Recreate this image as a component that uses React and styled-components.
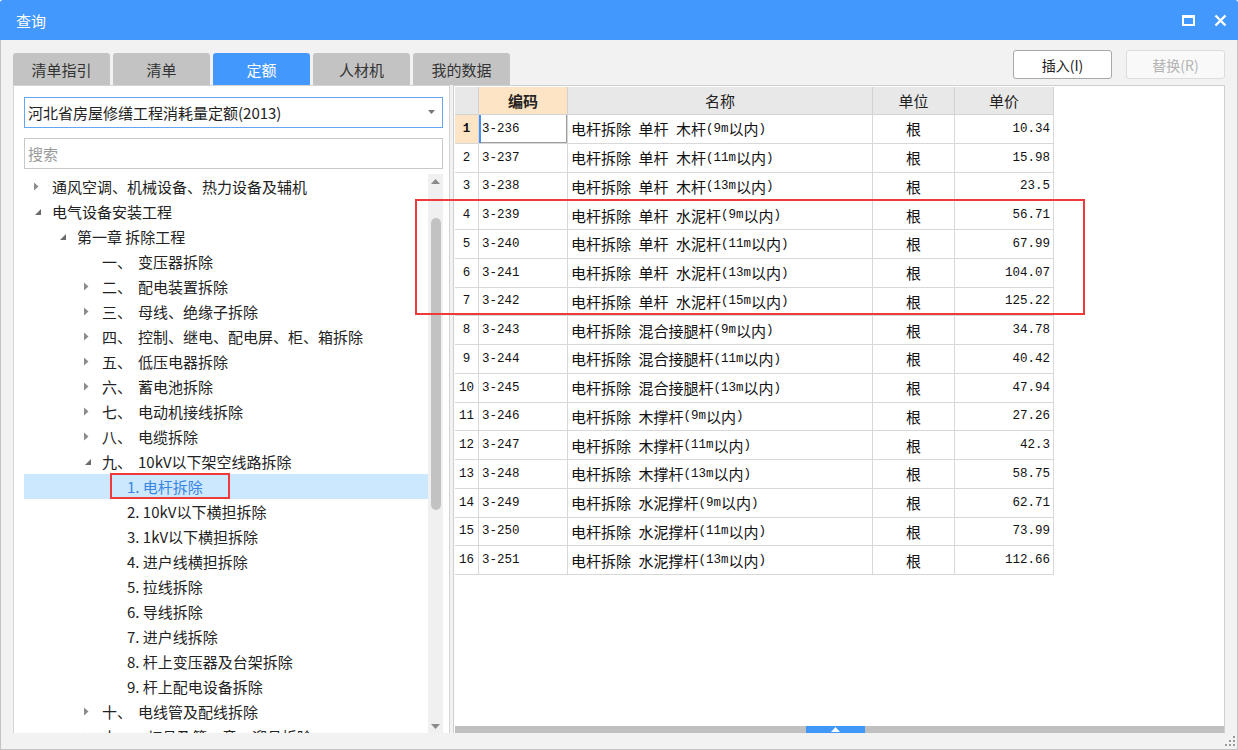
import React from "react";
import styled, { createGlobalStyle } from "styled-components";

const GlobalStyle = createGlobalStyle`
  html, body {
    margin: 0;
    padding: 0;
    background: #ffffff;
  }
  body {
    font-family: "Noto Sans CJK SC", "Noto Sans", sans-serif;
    color: #222;
  }
`;

const Window = styled.div`
  position: relative;
  width: 1238px;
  height: 750px;
  display: flex;
  flex-direction: column;
  overflow: hidden;
`;

const TitleBar = styled.div`
  height: 40px;
  flex: none;
  background: #4398fd;
  border-radius: 3px 3px 0 0;
  display: flex;
  align-items: center;
  justify-content: space-between;
  padding: 0 11px 0 16px;
  color: #fff;
  font-size: 15px;
`;

const WinButtons = styled.div`
  display: flex;
  align-items: center;
  gap: 19px;
`;

const Body = styled.div`
  flex: 1;
  display: flex;
  flex-direction: column;
  background: #f2f2f2;
  border: 1px solid #c4c4c4;
  border-top: none;
  padding: 0 12px;
  min-height: 0;
`;

const TopRow = styled.div`
  height: 45px;
  flex: none;
  display: flex;
  justify-content: space-between;
  align-items: flex-end;
`;

const Tabs = styled.div`
  display: flex;
  gap: 3px;
`;

const Tab = styled.div`
  width: 97px;
  height: 32px;
  border-radius: 3px 3px 0 0;
  display: flex;
  align-items: center;
  justify-content: center;
  font-size: 15px;
  background: ${(p) => (p.$active ? "#4398fd" : "#c3c3c3")};
  color: ${(p) => (p.$active ? "#fff" : "#333")};
`;

const Buttons = styled.div`
  align-self: flex-start;
  margin-top: 10px;
  display: flex;
  gap: 14px;
`;

const Button = styled.div`
  width: 99px;
  height: 29px;
  box-sizing: border-box;
  border: 1px solid ${(p) => (p.$disabled ? "#dddddd" : "#a8a8a8")};
  border-radius: 3px;
  background: ${(p) => (p.$disabled ? "#f9f9f9" : "#fff")};
  color: ${(p) => (p.$disabled ? "#b4b4b4" : "#222")};
  display: flex;
  align-items: center;
  justify-content: center;
  font-size: 14px;
`;

const Main = styled.div`
  height: 648px;
  flex: none;
  display: flex;
  gap: 3px;
`;

const LeftPanel = styled.div`
  width: 437px;
  box-sizing: border-box;
  background: #fff;
  border: 1px solid #d4d4d4;
  border-bottom: none;
  padding: 11px 6px 0 10px;
  display: flex;
  flex-direction: column;
`;

const Select = styled.div`
  height: 31px;
  flex: none;
  box-sizing: border-box;
  border: 1px solid #65a6f4;
  display: flex;
  align-items: center;
  justify-content: space-between;
  padding: 0 7px 1px 3px;
  font-size: 15px;
  color: #222;
`;

const Search = styled.div`
  height: 31px;
  flex: none;
  margin-top: 10px;
  box-sizing: border-box;
  border: 1px solid #c8c8c8;
  display: flex;
  align-items: center;
  padding: 0 0 1px 3px;
  font-size: 15px;
  color: #9a9a9a;
`;

const TreeArea = styled.div`
  margin-top: 5px;
  flex: 1;
  min-height: 0;
  display: flex;
`;

const TreeList = styled.div`
  flex: 1;
  overflow: hidden;
`;

const TreeRow = styled.div`
  position: relative;
  height: 25px;
  display: flex;
  align-items: center;
  padding-left: ${(p) => 8 + p.$level * 25}px;
  background: ${(p) => (p.$selected ? "#cce8ff" : "transparent")};
  color: ${(p) => (p.$selected ? "#3a85e2" : "#222")};
  font-size: 15px;
  white-space: nowrap;
`;

const Toggle = styled.span`
  width: 20px;
  flex: none;
  display: flex;
  align-items: center;
`;

const Num = styled.span`
  display: inline-block;
  min-width: 36px;
  flex: none;
`;

const Mark = styled.span`
  position: absolute;
  left: ${(p) => p.$left}px;
  top: ${(p) => p.$top}px;
  width: ${(p) => p.$width}px;
  height: ${(p) => p.$height}px;
  box-sizing: border-box;
  border: 2px solid #f0393b;
  pointer-events: none;
`;

const VScroll = styled.div`
  width: 15px;
  flex: none;
  background: #f0f0f0;
  display: flex;
  flex-direction: column;
  align-items: center;
`;

const ScrollArrow = styled.div`
  height: 14px;
  flex: none;
  display: flex;
  align-items: center;
  justify-content: center;
`;

const VThumb = styled.div`
  width: 10px;
  height: 292px;
  margin-top: 30px;
  border-radius: 5px;
  background: #c2c2c2;
`;

const Spacer = styled.div`
  flex: 1;
`;

const TablePanel = styled.div`
  flex: 1;
  box-sizing: border-box;
  background: #fff;
  border: 1px solid #cfcfcf;
  border-bottom: none;
  padding: 1px 0 0 1px;
  display: flex;
  flex-direction: column;
`;

const Grid = styled.div`
  display: grid;
  grid-template-columns: 24px 89px 305px 82px 99px;
  grid-template-rows: 28px repeat(16, 28.75px);
  width: 599px;
`;

const HeadCell = styled.div`
  box-sizing: border-box;
  border-right: 1px solid #d2d2d2;
  border-bottom: 1px solid #d2d2d2;
  background: ${(p) => (p.$hot ? "#fde4c4" : "#e8e8e8")};
  font-weight: ${(p) => (p.$hot ? 700 : 400)};
  display: flex;
  align-items: center;
  justify-content: center;
  font-size: 15px;
  color: #222;
`;

const Cell = styled.div`
  box-sizing: border-box;
  border-right: 1px solid #d8d8d8;
  border-bottom: 1px solid #d8d8d8;
  display: flex;
  align-items: center;
  justify-content: ${(p) => p.$align || "flex-start"};
  padding: 0 3px;
  font-size: 15px;
  color: #111;
  white-space: nowrap;
  overflow: hidden;
  background: ${(p) => (p.$hot ? "#fde4c4" : "#fff")};
  font-weight: ${(p) => (p.$hot ? 700 : 400)};
  box-shadow: ${(p) =>
    p.$focus ? "inset 2px 0 0 #4a8ff0, inset -1px -1px 0 #9c9c9c" : "none"};
`;

const Latin = styled.span`
  font-family: "Liberation Mono", "DejaVu Sans Mono", monospace;
  font-size: 12.5px;
  white-space: pre;
`;

const HScroll = styled.div`
  height: 7px;
  flex: none;
  background: #c0c0c0;
  display: flex;
`;

const HThumb = styled.div`
  margin-left: 351px;
  width: 59px;
  background: #3f97f8;
  display: flex;
  align-items: center;
  justify-content: center;
`;

const BottomBar = styled.div`
  flex: 1;
`;

const Grip = styled.svg`
  position: absolute;
  right: 3px;
  bottom: 4px;
`;

const Arrow = ({ open }) =>
  open ? (
    <svg width="8" height="8" viewBox="0 0 8 8" style={{ marginLeft: 2 }}>
      <polygon points="7,1 7,7 1,7" fill="#6b6b6b" />
    </svg>
  ) : (
    <svg width="6" height="9" viewBox="0 0 6 9" style={{ marginLeft: 1 }}>
      <polygon points="1,0.5 5.5,4.5 1,8.5" fill="#8c8c8c" />
    </svg>
  );

const tree = [
  { level: 0, state: "closed", text: "通风空调、机械设备、热力设备及辅机" },
  { level: 0, state: "open", text: "电气设备安装工程" },
  { level: 1, state: "open", text: "第一章 拆除工程" },
  { level: 2, num: "一、", text: "变压器拆除" },
  { level: 2, state: "closed", num: "二、", text: "配电装置拆除" },
  { level: 2, state: "closed", num: "三、", text: "母线、绝缘子拆除" },
  { level: 2, state: "closed", num: "四、", text: "控制、继电、配电屏、柜、箱拆除" },
  { level: 2, state: "closed", num: "五、", text: "低压电器拆除" },
  { level: 2, state: "closed", num: "六、", text: "蓄电池拆除" },
  { level: 2, state: "closed", num: "七、", text: "电动机接线拆除" },
  { level: 2, state: "closed", num: "八、", text: "电缆拆除" },
  { level: 2, state: "open", num: "九、", text: "10kV以下架空线路拆除" },
  { level: 3, text: "1. 电杆拆除", selected: true },
  { level: 3, text: "2. 10kV以下横担拆除" },
  { level: 3, text: "3. 1kV以下横担拆除" },
  { level: 3, text: "4. 进户线横担拆除" },
  { level: 3, text: "5. 拉线拆除" },
  { level: 3, text: "6. 导线拆除" },
  { level: 3, text: "7. 进户线拆除" },
  { level: 3, text: "8. 杆上变压器及台架拆除" },
  { level: 3, text: "9. 杆上配电设备拆除" },
  { level: 2, state: "closed", num: "十、", text: "电线管及配线拆除" },
  { level: 2, state: "closed", num: "十一、", text: "灯具及第一章一迎具拆除" },
];

const rows = [
  ["3-236", "电杆拆除 单杆 木杆(9m以内)", "10.34"],
  ["3-237", "电杆拆除 单杆 木杆(11m以内)", "15.98"],
  ["3-238", "电杆拆除 单杆 木杆(13m以内)", "23.5"],
  ["3-239", "电杆拆除 单杆 水泥杆(9m以内)", "56.71"],
  ["3-240", "电杆拆除 单杆 水泥杆(11m以内)", "67.99"],
  ["3-241", "电杆拆除 单杆 水泥杆(13m以内)", "104.07"],
  ["3-242", "电杆拆除 单杆 水泥杆(15m以内)", "125.22"],
  ["3-243", "电杆拆除 混合接腿杆(9m以内)", "34.78"],
  ["3-244", "电杆拆除 混合接腿杆(11m以内)", "40.42"],
  ["3-245", "电杆拆除 混合接腿杆(13m以内)", "47.94"],
  ["3-246", "电杆拆除 木撑杆(9m以内)", "27.26"],
  ["3-247", "电杆拆除 木撑杆(11m以内)", "42.3"],
  ["3-248", "电杆拆除 木撑杆(13m以内)", "58.75"],
  ["3-249", "电杆拆除 水泥撑杆(9m以内)", "62.71"],
  ["3-250", "电杆拆除 水泥撑杆(11m以内)", "73.99"],
  ["3-251", "电杆拆除 水泥撑杆(13m以内)", "112.66"],
];

// ascii runs get the narrow mono face, like the half-width glyphs of the original
function mixed(text) {
  return text
    .split(/([\x00-\x7f]+)/)
    .filter(Boolean)
    .map((part, i) =>
      /^[\x00-\x7f]+$/.test(part) ? (
        <Latin key={i}>{part}</Latin>
      ) : (
        <span key={i}>{part}</span>
      )
    );
}

export default function App() {
  return (
    <>
      <GlobalStyle />
      <Window>
        <TitleBar>
          <span>查询</span>
          <WinButtons>
            <svg width="13" height="11" viewBox="0 0 13 11">
              <rect x="1" y="1.5" width="11" height="8.5" fill="none" stroke="#fff" strokeWidth="2" />
              <rect x="0" y="0" width="13" height="3" fill="#fff" />
            </svg>
            <svg width="13" height="13" viewBox="0 0 13 13">
              <path d="M1.5 1.5 L11.5 11.5 M11.5 1.5 L1.5 11.5" stroke="#fff" strokeWidth="2.4" />
            </svg>
          </WinButtons>
        </TitleBar>
        <Body>
          <TopRow>
            <Tabs>
              <Tab>清单指引</Tab>
              <Tab>清单</Tab>
              <Tab $active>定额</Tab>
              <Tab>人材机</Tab>
              <Tab>我的数据</Tab>
            </Tabs>
            <Buttons>
              <Button>插入(I)</Button>
              <Button $disabled>替换(R)</Button>
            </Buttons>
          </TopRow>
          <Main>
            <LeftPanel>
              <Select>
                <span>河北省房屋修缮工程消耗量定额(2013)</span>
                <svg width="7" height="4" viewBox="0 0 7 4">
                  <polygon points="0,0 7,0 3.5,4" fill="#777" />
                </svg>
              </Select>
              <Search>搜索</Search>
              <TreeArea>
                <TreeList>
                  {tree.map((item, i) => (
                    <TreeRow key={i} $level={item.level} $selected={item.selected}>
                      <Toggle>{item.state && <Arrow open={item.state === "open"} />}</Toggle>
                      {item.num && <Num>{item.num}</Num>}
                      <span>{item.text}</span>
                      {item.selected && <Mark $left={86} $top={-1} $width={120} $height={26} />}
                    </TreeRow>
                  ))}
                </TreeList>
                <VScroll>
                  <ScrollArrow>
                    <svg width="9" height="5" viewBox="0 0 9 5">
                      <polygon points="0,5 9,5 4.5,0" fill="#8a8a8a" />
                    </svg>
                  </ScrollArrow>
                  <VThumb />
                  <Spacer />
                  <ScrollArrow>
                    <svg width="9" height="5" viewBox="0 0 9 5">
                      <polygon points="0,0 9,0 4.5,5" fill="#8a8a8a" />
                    </svg>
                  </ScrollArrow>
                </VScroll>
              </TreeArea>
            </LeftPanel>
            <TablePanel>
              <Grid>
                <HeadCell />
                <HeadCell $hot>编码</HeadCell>
                <HeadCell>名称</HeadCell>
                <HeadCell>单位</HeadCell>
                <HeadCell>单价</HeadCell>
                {rows.map(([code, name, price], i) => (
                  <React.Fragment key={code}>
                    <Cell $align="center" $hot={i === 0}>
                      <Latin>{i + 1}</Latin>
                    </Cell>
                    <Cell $focus={i === 0}>{mixed(code)}</Cell>
                    <Cell>{mixed(name)}</Cell>
                    <Cell $align="center">根</Cell>
                    <Cell $align="flex-end">{mixed(price)}</Cell>
                  </React.Fragment>
                ))}
              </Grid>
              <Spacer />
              <HScroll>
                <HThumb>
                  <svg width="9" height="5" viewBox="0 0 9 5">
                    <polygon points="0,5 9,5 4.5,0" fill="#fff" />
                  </svg>
                </HThumb>
              </HScroll>
            </TablePanel>
          </Main>
          <BottomBar />
        </Body>
        <Mark $left={415} $top={199} $width={670} $height={116} />
        <Grip width="10" height="10" viewBox="0 0 10 10">
          <rect x="8" y="0" width="2" height="2" fill="#9a9a9a" />
          <rect x="4" y="4" width="2" height="2" fill="#9a9a9a" />
          <rect x="8" y="4" width="2" height="2" fill="#9a9a9a" />
          <rect x="0" y="8" width="2" height="2" fill="#9a9a9a" />
          <rect x="4" y="8" width="2" height="2" fill="#9a9a9a" />
          <rect x="8" y="8" width="2" height="2" fill="#9a9a9a" />
        </Grip>
      </Window>
    </>
  );
}
